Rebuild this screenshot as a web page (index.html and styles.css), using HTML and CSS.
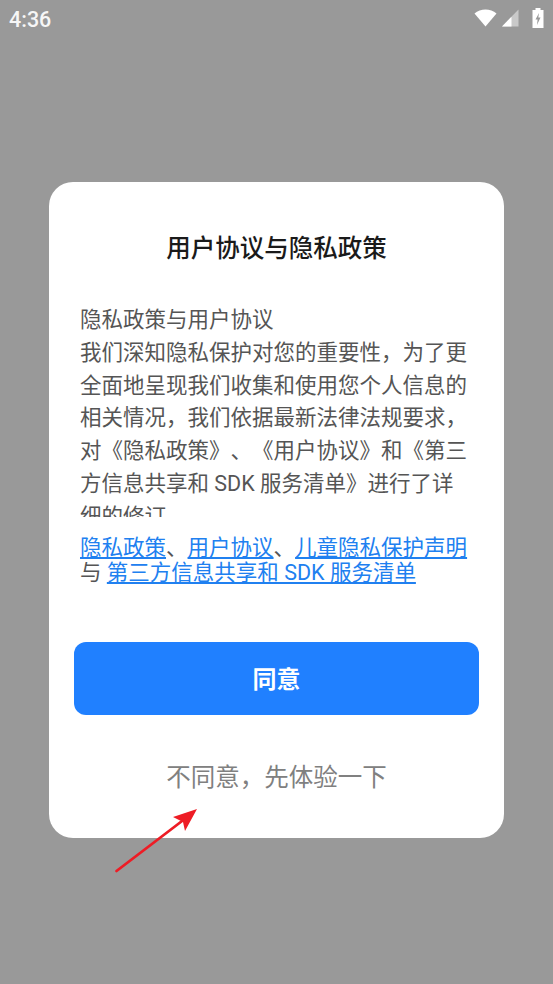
FILE: index.html
```html
<!DOCTYPE html>
<html lang="zh-CN">
<head>
<meta charset="utf-8">
<title>用户协议与隐私政策</title>
<link rel="stylesheet" href="styles.css">
</head>
<body>
<div class="screen">
  <header class="status">
    <span class="time">4:36</span>
    <div class="status-icons">
      <svg class="ic-wifi" width="24" height="18" viewBox="0 0 24 18"><path d="M0.500 4.500C3.500 2 7.500 0.500 11.500 0.500S19.500 2 22.500 4.500L11.500 17.500Z" fill="#fff"/></svg>
      <svg class="ic-signal" width="17" height="18" viewBox="0 0 17 18"><path d="M0 17.500L16.500 0.500V17.500Z" fill="#c9c9c9"/><path d="M0 17.500L9.500 7.700V17.500Z" fill="#fff"/></svg>
      <svg class="ic-battery" width="12" height="20" viewBox="0 0 12 20"><path d="M3.500 0H8.500V2H11.500V20H0.500V2H3.500Z" fill="#fff"/><path d="M7 5L3.500 11.500H5.600L5 17L8.500 9.500H6.300Z" fill="#999"/></svg>
    </div>
  </header>
  <main class="dialog">
    <h1 class="title">用户协议与隐私政策</h1>
    <div class="scroll">
      <p>隐私政策与用户协议<br>我们深知隐私保护对您的重要性，为了更全面地呈现我们收集和使用您个人信息的相关情况，我们依据最新法律法规要求，对《隐私政策》、《用户协议》和《第三方信息共享和 SDK 服务清单》进行了详细的修订</p>
    </div>
    <p class="links"><a href="#">隐私政策</a>、<a href="#">用户协议</a>、<a href="#">儿童隐私保护声明</a><br>与 <a href="#">第三方信息共享和 SDK 服务清单</a></p>
    <button class="agree">同意</button>
    <button class="decline">不同意，先体验一下</button>
  </main>
  <svg class="arrow" width="90" height="70" viewBox="0 0 90 70"><path d="M2.500 65L72 12" stroke="#ee1c25" stroke-width="2.800" stroke-linecap="round"/><path d="M83 3L59 11L69 16L71 25Z" fill="#ee1c25"/></svg>
</div>
</body>
</html>
```
FILE: styles.css
```css
* { box-sizing: border-box; }
html, body { margin: 0; padding: 0; }
.screen {
  position: relative;
  width: 553px;
  height: 984px;
  background: #999999;
  overflow: hidden;
  font-family: Roboto, "Noto Sans CJK SC", sans-serif;
  text-spacing-trim: space-all;
  padding-top: 182px;
}
.status {
  position: absolute;
  top: 0;
  left: 0;
  right: 0;
  height: 40px;
  display: flex;
  justify-content: space-between;
  align-items: flex-start;
  padding: 0 9px 0 9px;
  color: #fff;
}
.time { font-size: 21.500px; line-height: 39px; color: #f6f6f6; font-weight: 500; }
.status-icons { display: flex; align-items: flex-start; gap: 4px; padding-top: 9px; }
.ic-battery { margin-left: 9px; margin-top: -1px; }
.dialog {
  width: 455px;
  height: 656px;
  margin-left: 49px;
  background: #fff;
  border-radius: 24px;
  padding: 50px 25px 0;
  display: flex;
  flex-direction: column;
}
.title {
  margin: 0;
  font-size: 24.500px;
  line-height: 34px;
  font-weight: 500;
  color: #1a1a1a;
  text-align: center;
}
.scroll {
  margin: 38px 9px 0 6px;
  height: 213px;
  overflow: hidden;
  flex: none;
}
.scroll p {
  margin: 0;
  font-size: 21.500px;
  line-height: 32.800px;
  color: #555;
}
.links {
  margin: 18px 6px 0;
  font-size: 21.500px;
  line-height: 25px;
  color: #555;
  white-space: nowrap;
}
.links a { color: #2080f0; }
.agree {
  display: block;
  flex: none;
  margin-top: 57px;
  height: 73px;
  padding: 0 0 3px;
  border: 0;
  border-radius: 12px;
  background: #2080ff;
  color: #fff;
  font: 700 24px Roboto, "Noto Sans CJK SC", sans-serif;
}
.decline {
  display: block;
  margin-top: 45px;
  border: 0;
  background: none;
  padding: 0;
  color: #808080;
  font: 400 24.500px/36px Roboto, "Noto Sans CJK SC", sans-serif;
}
.arrow {
  position: absolute;
  left: 114px;
  top: 806px;
}
```
